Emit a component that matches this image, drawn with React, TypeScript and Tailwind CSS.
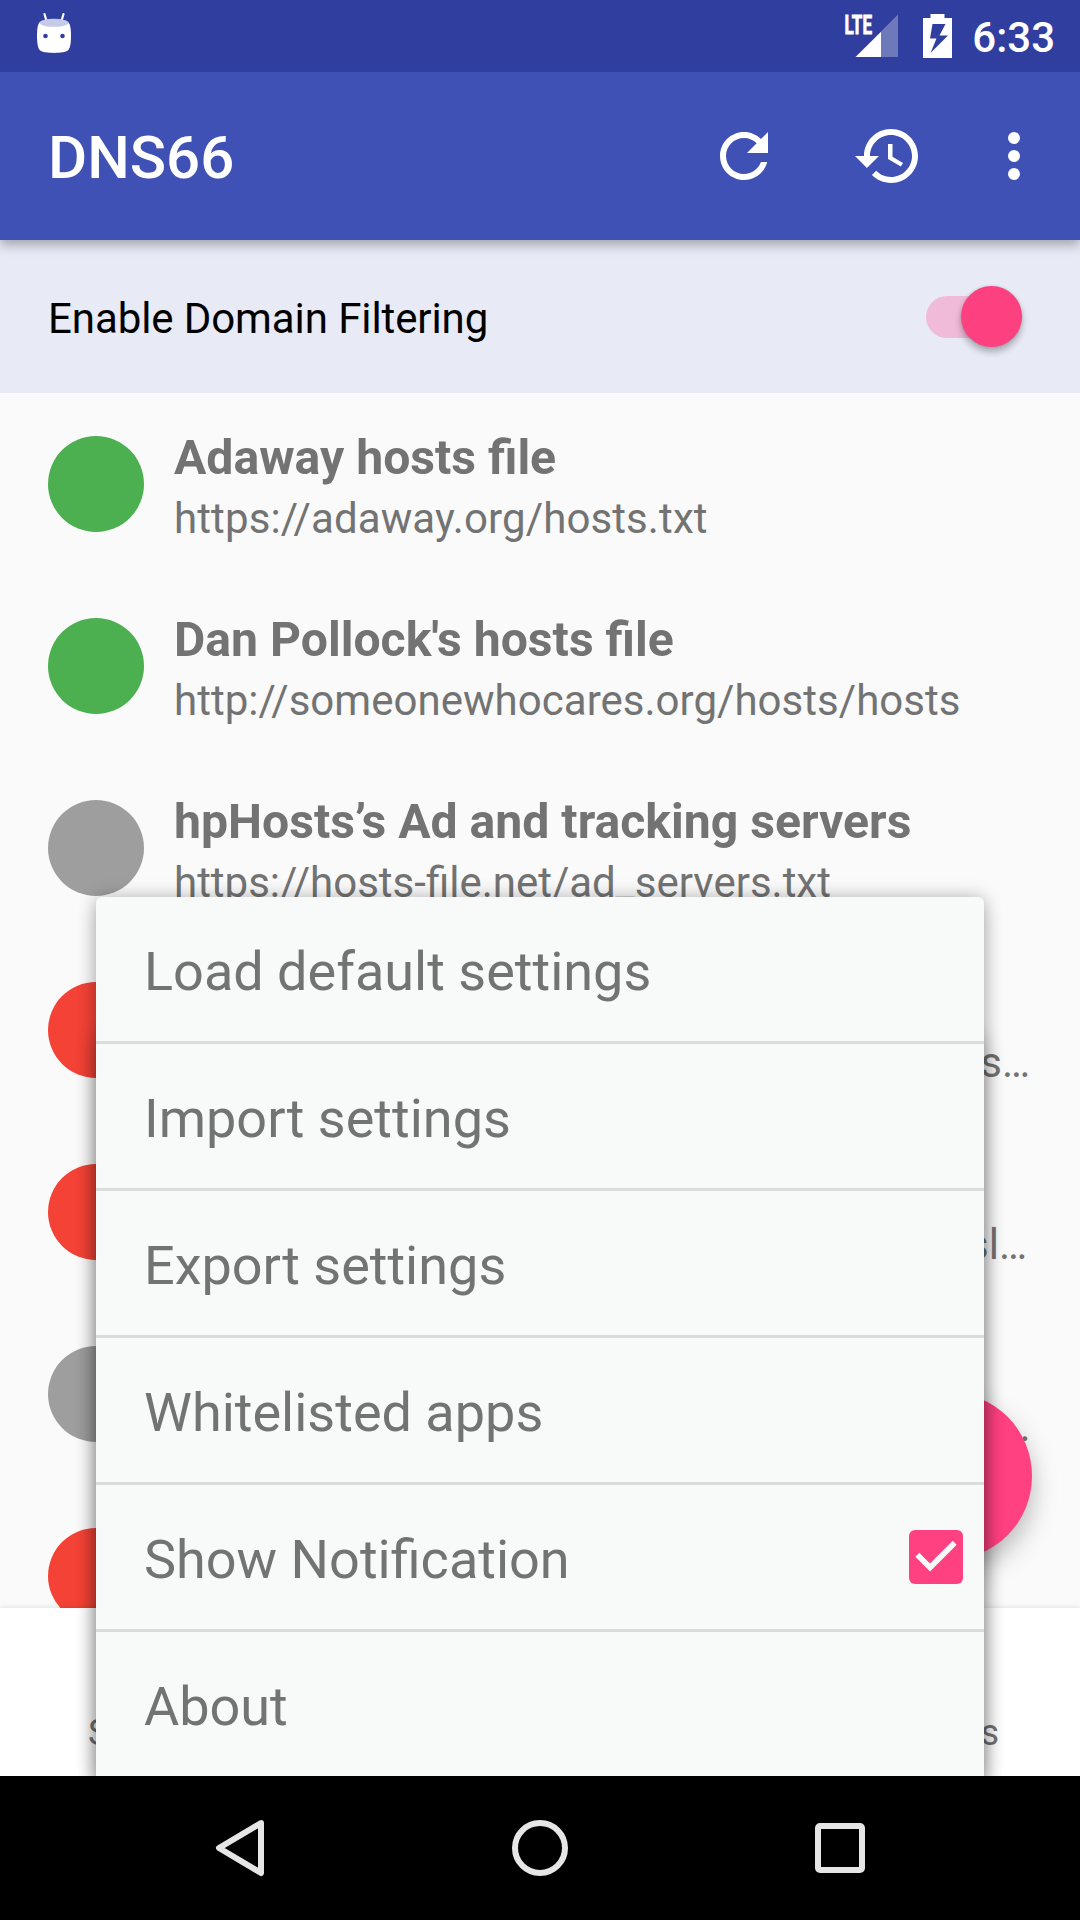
import React from "react";

const GREEN = "bg-[#4caf50]";
const GRAY = "bg-[#9e9e9e]";
const RED = "bg-[#f44336]";

const hosts = [
  { title: "Adaway hosts file", url: "https://adaway.org/hosts.txt", dot: GREEN, urlClass: "leading-[64px] tracking-[0.11px]" },
  { title: "Dan Pollock's hosts file", url: "http://someonewhocares.org/hosts/hosts", dot: GREEN, urlClass: "leading-[64px] tracking-[0.03px]" },
  { title: "hpHosts’s Ad and tracking servers", url: "https://hosts-file.net/ad_servers.txt", dot: GRAY, urlClass: "leading-[64px]" },
  { title: "Malware domains", url: "https://mirror.malwaredomains/domains…", dot: RED, urlClass: "leading-[60px] text-right pr-[2px]" },
  { title: "Ransomware list", url: "https://tracker.abuse.ch/blocklist/sl…", dot: RED, urlClass: "leading-[60px] text-right pr-[5px]" },
  { title: "Peter Lowe’s list", url: "https://pgl.yoyo.org/adservers/server…", dot: GRAY, urlClass: "leading-[60px] text-right pr-[2px]" },
  { title: "Tracking list", url: "", dot: RED, urlClass: "" },
];

const menu = [
  "Load default settings",
  "Import settings",
  "Export settings",
  "Whitelisted apps",
  "Show Notification",
  "About",
];

function StatusBar() {
  return (
    <div className="relative z-20 flex h-[72px] items-start bg-[#303f9f] text-white">
      <svg className="ml-[36px] mt-[12px] shrink-0" width="36" height="42" viewBox="0 0 36 42">
        <path d="M8.500 2l2 7M27.500 2l-2 7" stroke="#fff" strokeWidth="2.200" strokeLinecap="round" />
        <path
          d="M4 10C1.600 12 1 17 1 24c0 7 .8 11.500 2.600 14C6 40.200 12 40.900 18 40.900s12-.7 14.400-2.900C34.200 35.500 35 31 35 24c0-7-.6-12-3-14z"
          fill="#fff"
        />
        <ellipse cx="18" cy="10.800" rx="14.500" ry="4" fill="#c5cae9" />
        <circle cx="9.500" cy="24" r="2.300" fill="#303f9f" />
        <circle cx="26.500" cy="24" r="2.300" fill="#303f9f" />
      </svg>
      <svg className="ml-auto mt-[12px] shrink-0 overflow-visible" width="56" height="48" viewBox="0 0 56 48">
        <text
          x="0.500"
          y="21.700"
          fill="#fff"
          stroke="#fff"
          strokeWidth="0.800"
          fontFamily="Roboto"
          fontWeight="700"
          fontSize="25"
          textLength="27.500"
          lengthAdjust="spacingAndGlyphs"
        >
          LTE
        </text>
        <path d="M54 2.500V45H37V19.500z" fill="#fff" fillOpacity=".3" />
        <path d="M37 19.700V45H11.500z" fill="#fff" />
      </svg>
      <svg className="ml-[23px] mt-[14px] shrink-0" width="30" height="44" viewBox="0 0 30 44">
        <path
          fillRule="evenodd"
          fill="#fff"
          d="M7.500 0h14v4H29v40H0V4h7.500zM9.500 10L7 24.500h6.500L7.500 39 25 21.500h-8.500L22.500 10z"
        />
      </svg>
      <span className="ml-[20px] mr-[25px] mt-[13px] flex w-[82px] shrink-0 justify-end text-[42px] font-medium leading-[50px]">6:33</span>
    </div>
  );
}

function Toolbar() {
  return (
    <header className="relative z-10 flex h-[168px] items-center bg-[#3f51b5] pl-[48px] pr-[30px] text-white shadow-[0_5px_11px_rgba(0,0,0,0.3)]">
      <h1 className="mt-[4px] text-[60px] font-medium leading-[70px]">DNS66</h1>
      <svg className="ml-auto size-[72px]" viewBox="0 0 24 24" fill="currentColor">
        <path d="M17.65 6.35C16.2 4.9 14.21 4 12 4c-4.42 0-7.99 3.58-7.99 8s3.57 8 7.99 8c3.73 0 6.84-2.55 7.73-6h-2.08c-.82 2.33-3.04 4-5.65 4-3.31 0-6-2.69-6-6s2.69-6 6-6c1.66 0 3.14.69 4.22 1.78L13 11h7V4l-2.35 2.35z" />
      </svg>
      <svg className="ml-[72px] size-[72px]" viewBox="0 0 24 24" fill="currentColor">
        <path d="M13 3c-4.97 0-9 4.03-9 9H1l3.89 3.89.07.14L9 12H6c0-3.87 3.13-7 7-7s7 3.130 7 7-3.130 7-7 7c-1.930 0-3.680-.79-4.940-2.060l-1.420 1.420C8.270 19.990 10.510 21 13 21c4.970 0 9-4.030 9-9s-4.030-9-9-9zm-1 5v5l4.280 2.540.72-1.210-3.500-2.080V8H12z" />
      </svg>
      <svg className="ml-[54px] size-[72px]" viewBox="0 0 24 24" fill="currentColor">
        <circle cx="12" cy="6" r="2" />
        <circle cx="12" cy="12" r="2" />
        <circle cx="12" cy="18" r="2" />
      </svg>
    </header>
  );
}

function FilterSwitch() {
  return (
    <div className="flex h-[153px] items-center justify-between bg-[#e8eaf6] pl-[48px] pr-[58px] text-[42px] text-black">
      <span className="mt-[3px] tracking-[-0.09px]">Enable Domain Filtering</span>
      <div className="flex h-[42px] w-[96px] items-center justify-end rounded-full bg-[#efbbd8]">
        <div className="size-[61px] shrink-0 rounded-full bg-[#fd407f] shadow-[0_5px_7px_rgba(0,0,0,0.28),0_0_3px_rgba(0,0,0,0.12)]" />
      </div>
    </div>
  );
}

function HostList() {
  return (
    <ul className="h-[1215px] overflow-hidden bg-[#fafafa] pl-[48px] pr-[48px] pt-[25px]">
      {hosts.map((h) => (
        <li key={h.title} className="flex h-[182px] gap-[30px] text-[#737373]">
          <div className={`mt-[18px] size-[96px] shrink-0 rounded-full ${h.dot}`} />
          <div className="min-w-0 flex-1 whitespace-nowrap pt-[11px]">
            <div className="text-[48.15px] font-bold leading-[58px]">{h.title}</div>
            <div className={`text-[42px] ${h.urlClass}`}>{h.url}</div>
          </div>
        </li>
      ))}
    </ul>
  );
}

function PopupMenu() {
  return (
    <div className="absolute left-[96px] top-[897px] z-20 h-[879px] w-[888px] rounded-t-[6px] bg-[#f8faf9] text-[54px] text-[#737373] shadow-[0_0_18px_rgba(0,0,0,0.26),0_140px_20px_rgba(0,0,0,0.28),0_10px_20px_rgba(0,0,0,0.15)]">
      {menu.map((label, i) => (
        <div
          key={label}
          className={
            "flex items-center justify-between pl-[48px] pr-[21px] " +
            (i < menu.length - 1 ? "h-[147px] border-b-[3px] border-[#dadcdb]" : "h-[144px]")
          }
        >
          <span className="mt-[4px]">{label}</span>
          {label === "Show Notification" && (
            <svg width="54" height="54" viewBox="0 0 54 54">
              <rect width="54" height="54" rx="6" fill="#ff4081" />
              <path d="M8.300 24.800L21 37.500 45.700 12.800" fill="none" stroke="#f8faf9" strokeWidth="5.600" />
            </svg>
          )}
        </div>
      ))}
    </div>
  );
}

export default function App() {
  return (
    <div className="relative flex h-[1920px] w-[1080px] flex-col overflow-hidden bg-[#fafafa] font-['Roboto',sans-serif]">
      <StatusBar />
      <Toolbar />
      <FilterSwitch />
      <HostList />
      <div className="absolute left-[864px] top-[1392px] size-[168px] rounded-full bg-[#ff4081] shadow-[0_12px_26px_rgba(0,0,0,0.27)]" />
      <div className="relative flex h-[168px] items-end justify-between bg-white pb-[22px] pl-[88px] pr-[81px] text-[36px] leading-[42px] text-[#737373] shadow-[0_0_6px_rgba(0,0,0,0.13)]">
        <span>Start</span>
        <span>DNS servers</span>
      </div>
      <PopupMenu />
      <nav className="relative z-30 flex h-[144px] items-center bg-black pl-[210px]">
        <svg width="60" height="60" viewBox="0 0 60 60" fill="none" stroke="#e6e6e6" strokeWidth="6" strokeLinejoin="round">
          <path d="M51 5L9 30l42 25z" />
        </svg>
        <svg className="ml-[240px]" width="60" height="60" viewBox="0 0 60 60" fill="none" stroke="#e6e6e6" strokeWidth="6">
          <circle cx="30" cy="30" r="25" />
        </svg>
        <svg className="ml-[240px]" width="60" height="60" viewBox="0 0 60 60" fill="none" stroke="#e6e6e6" strokeWidth="6">
          <rect x="8" y="8" width="44" height="44" rx="2" />
        </svg>
      </nav>
    </div>
  );
}
